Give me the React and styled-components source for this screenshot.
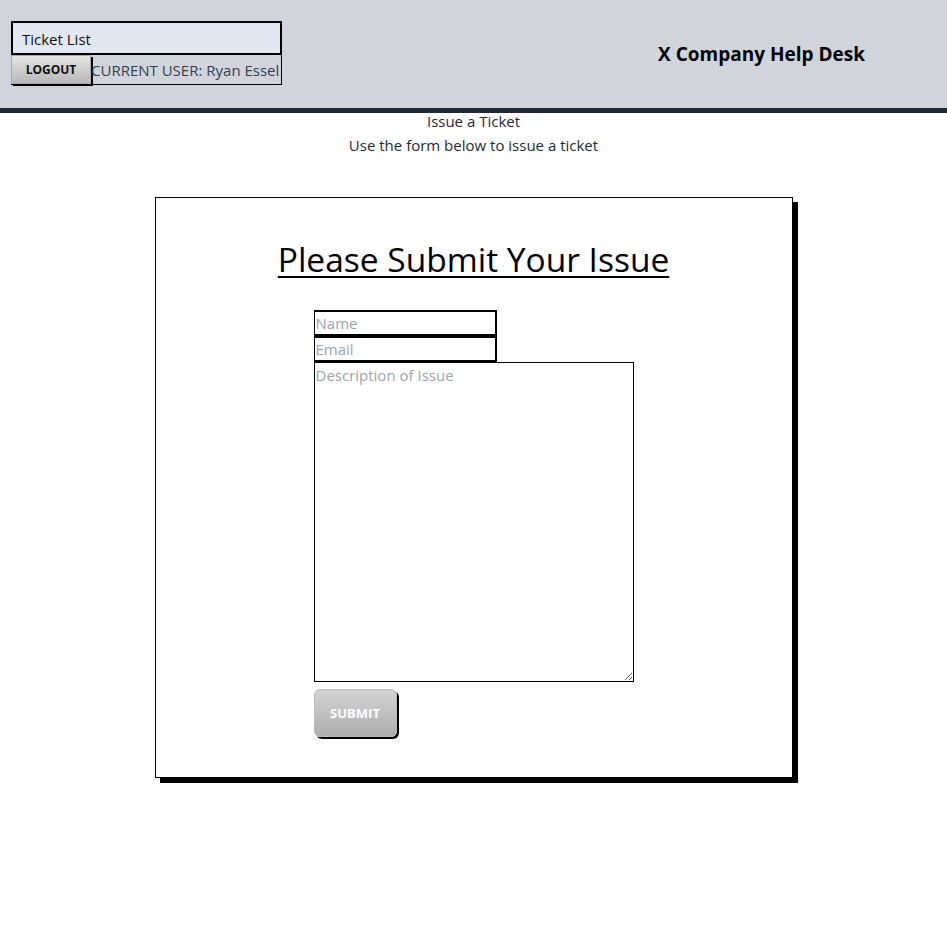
import styled, { createGlobalStyle } from 'styled-components';

const Global = createGlobalStyle`
  body {
    margin: 0;
    font-family: "Open Sans", "Noto Sans", sans-serif;
    color: #1f2937;
    background: #fff;
  }
  * { box-sizing: border-box; }
`;

const Page = styled.div`
  min-height: 100vh;
  padding-bottom: 40px;
`;

const Header = styled.header`
  display: flex;
  align-items: center;
  justify-content: space-between;
  height: 113px;
  padding: 21px 82px 22px 11px;
  background: #d1d5db;
  border-bottom: 5px solid #1f2937;
`;

const NavBox = styled.nav`
  display: flex;
  flex-direction: column;
  width: 271px;
  align-self: flex-start;
`;

const NavLink = styled.a`
  display: block;
  height: 34px;
  padding: 6px 9px;
  background: #e2e8f0;
  border: 2px solid #000;
  color: #111;
  font-size: 15px;
  text-decoration: none;
`;

const UserRow = styled.div`
  display: flex;
  align-items: center;
  height: 30px;
  border: 1px solid #000;
  border-top: none;
`;

const LogoutButton = styled.button`
  width: 80px;
  height: 29px;
  margin-left: -1px;
  font-family: inherit;
  font-size: 12px;
  font-weight: 700;
  color: #111;
  background: linear-gradient(#e5e5e5, #b8b8b8);
  border: 1px solid #aaa;
  box-shadow: 2px 2px 0 #000;
  cursor: pointer;
`;

const UserText = styled.span`
  font-size: 15px;
  color: #374151;
  white-space: nowrap;
`;

const SiteTitle = styled.h1`
  margin: 0;
  font-size: 19px;
  font-weight: 700;
  color: #000;
`;

const Intro = styled.div`
  text-align: center;
  font-size: 15px;
  line-height: 24px;
  margin-top: -4px;
`;

const Card = styled.section`
  width: 638px;
  margin: 40px auto 0;
  padding: 38px 0 40px;
  border: 1px solid #000;
  box-shadow: 5px 5px 0 #000;
  background: #fff;
`;

const FormTitle = styled.h2`
  margin: 0 0 28px;
  text-align: center;
  font-size: 33.5px;
  font-weight: 400;
  color: #000;
  text-decoration: underline;
  text-decoration-thickness: 2px;
  text-underline-offset: 4px;
`;

const Form = styled.form`
  display: flex;
  flex-direction: column;
  align-items: flex-start;
  width: 320px;
  margin: 0 auto;
`;

const Field = styled.input`
  width: 183px;
  height: 26px;
  padding: 0 1px;
  font-family: inherit;
  font-size: 15px;
  border: 2px solid #000;
  border-left-width: 1px;
  &::placeholder { color: #9ca3af; }
`;

const TextArea = styled.textarea`
  width: 320px;
  height: 320px;
  padding: 2px 1px;
  font-family: inherit;
  font-size: 15px;
  border: 1px solid #000;
  resize: both;
  &::placeholder { color: #9ca3af; }
`;

const SubmitButton = styled.button`
  margin-top: 7px;
  width: 83px;
  height: 48px;
  font-family: inherit;
  font-size: 13px;
  font-weight: 700;
  color: #fff;
  background: linear-gradient(#d4d4d4, #adadad);
  border: 1px solid #bbb;
  border-radius: 6px;
  box-shadow: 2px 2px 0 #000;
  cursor: pointer;
`;

export default function App() {
  return (
    <Page>
      <Global />
      <Header>
        <NavBox>
          <NavLink href="#">Ticket List</NavLink>
          <UserRow>
            <LogoutButton>LOGOUT</LogoutButton>
            <UserText>CURRENT USER: Ryan Essel</UserText>
          </UserRow>
        </NavBox>
        <SiteTitle>X Company Help Desk</SiteTitle>
      </Header>
      <Intro>
        <div>Issue a Ticket</div>
        <div>Use the form below to issue a ticket</div>
      </Intro>
      <Card>
        <FormTitle>Please Submit Your Issue</FormTitle>
        <Form onSubmit={(e) => e.preventDefault()}>
          <Field placeholder="Name" />
          <Field placeholder="Email" />
          <TextArea placeholder="Description of Issue" />
          <SubmitButton type="submit">SUBMIT</SubmitButton>
        </Form>
      </Card>
    </Page>
  );
}
